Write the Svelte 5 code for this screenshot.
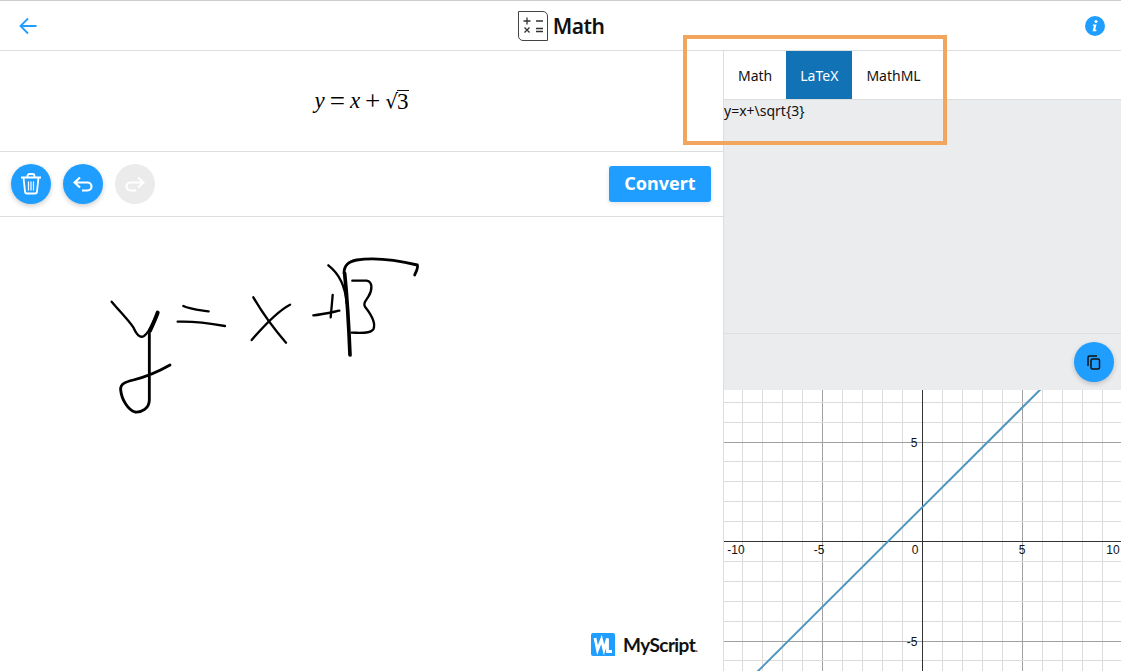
<script lang="ts">
	const tabs = ['Math', 'LaTeX', 'MathML'];
	let active = $state('LaTeX');
	const latex = 'y=x+\\sqrt{3}';

	// graph geometry, in svg pixels
	const W = 397;
	const H = 281;
	const X0 = 198.5;
	const Y0 = 151.5;
	const UX = 19.95;
	const UY = 19.9;

	const xTicks = Array.from({ length: 21 }, (_, i) => i - 10);
	const yTicks = Array.from({ length: 16 }, (_, i) => i - 7);
	const px = (v: number) => X0 + v * UX;
	const py = (v: number) => Y0 - v * UY;

	const xLabels = [
		{ t: '-10', x: 12 },
		{ t: '-5', x: 95 },
		{ t: '0', x: 191 },
		{ t: '5', x: 298 },
		{ t: '10', x: 389 }
	];
	const yLabels = [
		{ t: '5', x: 190, y: 56.5 },
		{ t: '-5', x: 188, y: 255.5 }
	];

	// ink strokes, traced at 3x
	const strokes = [
		'M65 185C90 215 115 240 130 262C140 285 150 295 162 288C178 278 190 245 203 218',
		'M280 198C300 208 330 210 356 214',
		'M263 245C310 243 360 250 405 258',
		'M490 172C515 215 555 270 588 308',
		'M485 300C515 265 560 215 600 194',
		'M670 226C695 224 720 218 748 212',
		'M728 165C726 190 724 210 722 232',
		'M715 76C740 95 765 130 770 190',
		'M787 122L830 122C848 125 848 150 835 170C825 185 820 190 825 200C845 225 858 250 850 268C840 282 810 278 785 278'
	];
</script>

<div class="page">
	<header class="topbar">
		<button class="plain" aria-label="Back">
			<svg width="18" height="18" viewBox="0 0 18 18" fill="none" stroke="#1f9eff" stroke-width="1.8">
				<path d="M17.5 9H1.5M9 1.5L1.5 9L9 16.5" />
			</svg>
		</button>
		<div class="title">
			<svg class="mathicon" width="30" height="30" viewBox="0 0 30 30" fill="none" stroke="#333" stroke-width="1.3">
				<path d="M.5 .5H25A4.5 4.5 0 0 1 29.500 5V29.500H5A4.500 4.500 0 0 1 .5 25Z" stroke="#444" stroke-width="1" />
				<path d="M5.500 10H12.500M9 6.500V13.500M18 10H25M6.500 16.500L11.500 21.500M11.500 16.500L6.500 21.500M18 17.500H25M18 20.500H25" />
			</svg>
			<span>Math</span>
		</div>
		<button class="plain" aria-label="About">
			<svg width="20" height="20" viewBox="0 0 20 20">
				<circle cx="10" cy="10" r="10" fill="#1f9eff" />
				<circle cx="11" cy="5.500" r="1.500" fill="#fff" />
				<path d="M8 8.500H11.500L10.200 13.800H11.500L11.200 15.200H7.600L8.900 9.800H7.700Z" fill="#fff" />
			</svg>
		</button>
	</header>

	<main class="body">
		<section class="left">
			<div class="formula">
				<i>y</i><span class="op">=</span><i>x</i><span class="op">+</span><span class="radic">√</span><span class="radicand">3</span>
			</div>
			<div class="toolbar">
				<div class="actions">
					<button class="round" aria-label="Clear">
						<svg width="20" height="22" viewBox="0 0 20 22" fill="none" stroke="#fff" stroke-width="1.800">
							<path d="M0 4.500H20M6.500 4.500V3A2 2 0 0 1 8.500 1H11.500A2 2 0 0 1 13.500 3V4.500M2.500 4.500L4 18.500A2 2 0 0 0 6 20.500H14A2 2 0 0 0 16 18.500L17.500 4.500" />
							<path d="M7.500 8.500V17.500M10 8.500V17.500M12.500 8.500V17.500" stroke-width="1.200" />
						</svg>
					</button>
					<button class="round" aria-label="Undo">
						<svg width="20" height="16" viewBox="0 0 20 16" fill="none" stroke="#fff" stroke-width="2.200">
							<path d="M7 1.500L1.500 6.500L7 11.500M1.500 6.500H14.500A4 4 0 0 1 14.500 14.500H9" />
						</svg>
					</button>
					<button class="round off" aria-label="Redo">
						<svg width="20" height="16" viewBox="0 0 20 16" fill="none" stroke="#fff" stroke-width="2.200">
							<path d="M13 1.500L18.500 6.500L13 11.500M18.500 6.500H5.500A4 4 0 0 0 5.500 14.500H11" />
						</svg>
					</button>
				</div>
				<button class="convert">Convert</button>
			</div>
			<div class="canvas">
				<svg class="ink" width="340" height="180" viewBox="0 0 1020 540" fill="none" stroke="#000" stroke-width="7" stroke-linecap="round" stroke-linejoin="round">
					{#each strokes as d}
						<path {d} />
					{/each}
					<path d="M178 280L178 480C178 505 155 518 135 516C115 510 95 480 92 450C90 430 110 425 130 420C170 410 205 395 240 375" stroke-width="8.500" />
					<path d="M762 100C762 75 775 65 800 60C850 52 920 60 982 75C985 85 978 95 974 105" stroke-width="8.500" />
					<path d="M180 272C188 255 196 238 203 218" stroke-width="12" />
					<path d="M764 100C772 180 777 270 780 345" stroke-width="11" />
				</svg>
				<div class="brand">
					<svg width="24" height="23" viewBox="0 0 24 23">
						<path d="M2 0H22A2 2 0 0 1 24 2V23H2A2 2 0 0 1 0 21V2A2 2 0 0 1 2 0Z" fill="#1f9eff" />
						<path d="M4 5L6.500 17L10.500 6.500L13 17L16.500 5.500V18.500H21" fill="none" stroke="#fff" stroke-width="2.800" />
					</svg>
					<span>MyScript<small>.</small></span>
				</div>
			</div>
		</section>

		<aside class="right">
			<nav class="tabs">
				{#each tabs as tab}
					<button class="tab" class:active={active === tab} onclick={() => (active = tab)}>{tab}</button>
				{/each}
			</nav>
			<div class="output">
				<div class="source">{latex}</div>
				<div class="outfoot">
					<button class="round copy" aria-label="Copy">
						<svg width="14" height="15" viewBox="0 0 14 15" fill="none" stroke="#111" stroke-width="1.500">
							<path d="M1 11V2.500A1.500 1.500 0 0 1 2.500 1H10" />
							<rect x="4" y="4" width="8.500" height="10" rx="1.500" />
						</svg>
					</button>
				</div>
			</div>
			<svg class="graph" width={W} height={H} viewBox="0 0 {W} {H}">
				{#each xTicks as k}
					{#if k !== 0}
						<line class="rule" x1={px(k)} x2={px(k)} y1="0" y2={H} stroke={k % 5 === 0 ? '#a0a0a0' : '#dcdcdc'} />
					{/if}
				{/each}
				{#each yTicks as k}
					{#if k !== 0}
						<line class="rule" x1="0" x2={W} y1={py(k)} y2={py(k)} stroke={k % 5 === 0 ? '#a0a0a0' : '#dcdcdc'} />
					{/if}
				{/each}
				<line class="rule" x1={X0} x2={X0} y1="0" y2={H} stroke="#333" />
				<line class="rule" x1="0" x2={W} y1={Y0} y2={Y0} stroke="#333" />
				<line x1={px(-11)} y1={py(-11 + Math.sqrt(3))} x2={px(9)} y2={py(9 + Math.sqrt(3))} stroke="#5096bf" stroke-width="2" />
				{#each xLabels as l}
					<text x={l.x} y="164" text-anchor="middle">{l.t}</text>
				{/each}
				{#each yLabels as l}
					<text x={l.x} y={l.y} text-anchor="middle">{l.t}</text>
				{/each}
			</svg>
		</aside>
	</main>

	<div class="callout"></div>
</div>

<style>
	:global(body) {
		margin: 0;
		background: #fff;
	}

	.page {
		position: relative;
		height: 671px;
		overflow: hidden;
		display: flex;
		flex-direction: column;
		font-family: 'Noto Sans', sans-serif;
		color: #111;
	}

	button {
		font: inherit;
		border: none;
		padding: 0;
		cursor: pointer;
	}

	.topbar {
		box-sizing: border-box;
		height: 51px;
		flex-shrink: 0;
		display: flex;
		align-items: center;
		justify-content: space-between;
		padding: 0 16px 0 19px;
		border-top: 1px solid #ccc;
		border-bottom: 1px solid #ddd;
	}

	.plain {
		display: flex;
		background: transparent;
	}

	.title {
		display: flex;
		align-items: center;
		gap: 5px;
		font-size: 21px;
		font-weight: 600;
		letter-spacing: -0.5px;
		line-height: 30px;
	}

	.body {
		flex: 1;
		display: flex;
		min-height: 0;
	}

	.left {
		box-sizing: border-box;
		width: 724px;
		flex-shrink: 0;
		display: flex;
		flex-direction: column;
		border-right: 1px solid #ddd;
	}

	.formula {
		box-sizing: border-box;
		height: 101px;
		display: flex;
		align-items: center;
		justify-content: center;
		font-family: 'Liberation Serif', serif;
		font-size: 23px;
		color: #000;
		border-bottom: 1px solid #ddd;
	}

	.op {
		font-size: 27px;
		line-height: 24px;
		margin: 0 5px;
	}

	.radic {
		font-family: 'DejaVu Sans', sans-serif;
		font-size: 20px;
	}

	.radicand {
		border-top: 1px solid #111;
		line-height: 21px;
		margin-left: -1px;
	}

	.toolbar {
		box-sizing: border-box;
		height: 65px;
		display: flex;
		align-items: center;
		justify-content: space-between;
		padding: 0 12px 0 11px;
		border-bottom: 1px solid #ddd;
	}

	.actions {
		display: flex;
		gap: 12px;
	}

	.round {
		width: 40px;
		height: 40px;
		border-radius: 50%;
		background: #1f9eff;
		display: flex;
		align-items: center;
		justify-content: center;
		box-shadow: 0 2px 5px rgba(0, 0, 0, 0.2);
	}

	.round.off {
		background: #ebebeb;
		box-shadow: none;
	}

	.convert {
		width: 102px;
		height: 36px;
		border-radius: 3px;
		background: #1f9eff;
		color: #fff;
		font-size: 18px;
		line-height: 33px;
		padding-bottom: 2px;
		font-weight: 700;
		box-shadow: 0 2px 5px rgba(0, 0, 0, 0.1);
	}

	.canvas {
		flex: 1;
		position: relative;
		padding: 23px 0 0 90px;
	}

	.ink {
		display: block;
	}

	.brand {
		position: absolute;
		left: 591px;
		top: 416px;
		display: flex;
		align-items: center;
		gap: 8px;
		font-family: Lato, sans-serif;
		font-size: 19px;
		font-weight: 700;
		letter-spacing: -0.6px;
		color: #111;
	}

	.brand small {
		font-size: 11px;
		color: #555;
	}

	.right {
		flex: 1;
		min-width: 0;
		display: flex;
		flex-direction: column;
	}

	.tabs {
		box-sizing: border-box;
		height: 48px;
		flex-shrink: 0;
		display: flex;
	}

	.tab {
		background: #fff;
		color: #111;
		font-size: 14px;
		padding: 0 14px;
	}

	.tab.active {
		background: #1272b6;
		color: #fff;
	}

	.output {
		height: 291px;
		flex-shrink: 0;
		display: flex;
		flex-direction: column;
		background: #ebecee;
		border-top: 1px solid #ddd;
		box-sizing: border-box;
	}

	.source {
		height: 235px;
		flex-shrink: 0;
		font-size: 14px;
		line-height: 24px;
		margin-top: -1px;
		border-bottom: 1px solid #ddd;
		box-sizing: border-box;
	}

	.outfoot {
		flex: 1;
		display: flex;
		justify-content: flex-end;
		align-items: flex-start;
		padding: 8px 7px 0 0;
	}

	.graph {
		display: block;
		flex-shrink: 0;
	}

	.rule {
		shape-rendering: crispEdges;
	}

	.graph text {
		font-family: 'Liberation Sans', sans-serif;
		font-size: 12px;
		fill: #111;
	}

	.callout {
		position: absolute;
		left: 683px;
		top: 35px;
		width: 264px;
		height: 110px;
		box-sizing: border-box;
		border: 4px solid #f2a55c;
		pointer-events: none;
	}
</style>
